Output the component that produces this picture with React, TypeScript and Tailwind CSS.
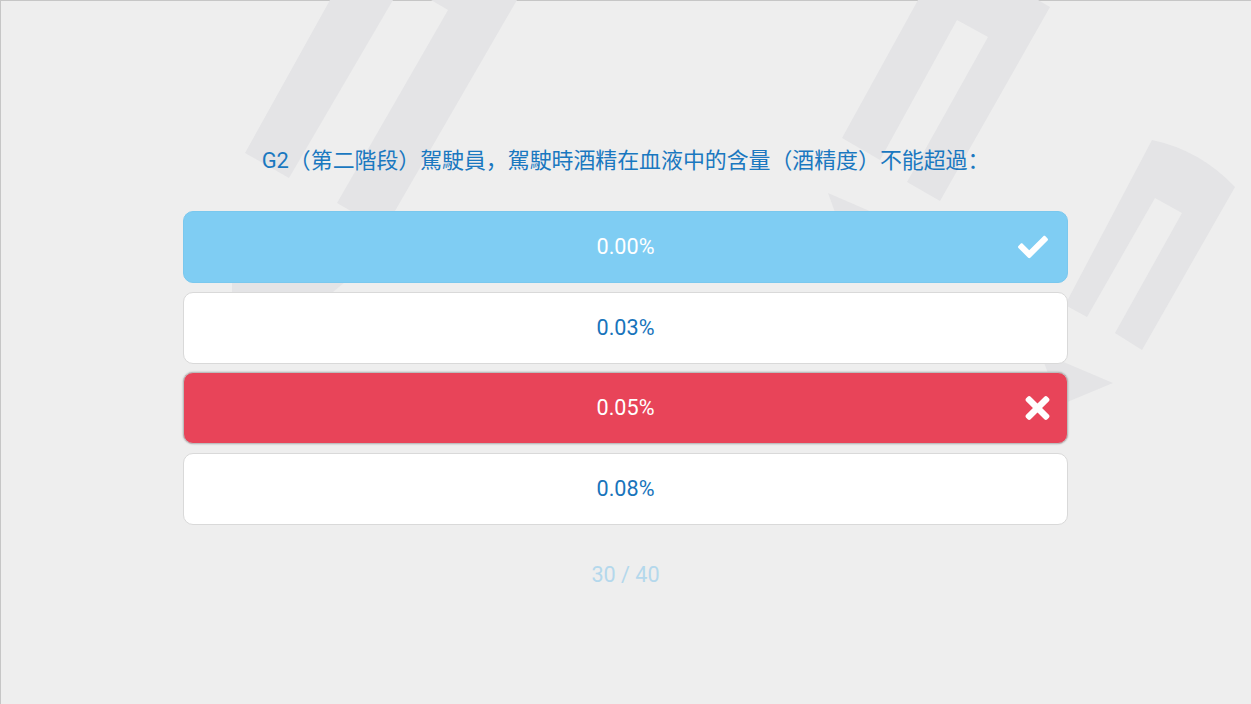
import React from 'react';

type Answer = { label: string; state: 'correct' | 'wrong' | 'idle' };

const answers: Answer[] = [
  { label: '0.00%', state: 'correct' },
  { label: '0.03%', state: 'idle' },
  { label: '0.05%', state: 'wrong' },
  { label: '0.08%', state: 'idle' },
];

const CheckIcon = () => (
  <svg className="w-[30px] h-[25px]" viewBox="0 65 512 382" fill="currentColor">
    <path d="M173.898 439.404l-166.4-166.4c-9.997-9.997-9.997-26.206 0-36.204l36.203-36.204c9.997-9.998 26.207-9.998 36.204 0L192 312.69 432.095 72.596c9.997-9.997 26.207-9.997 36.204 0l36.203 36.204c9.997 9.997 9.997 26.206 0 36.204l-294.4 294.401c-9.998 9.997-26.207 9.997-36.204-.001z" />
  </svg>
);

const CrossIcon = () => (
  <svg className="w-[25px] h-[24px]" viewBox="0 80 352 352" fill="currentColor">
    <path d="M242.72 256l100.07-100.07c12.28-12.28 12.28-32.19 0-44.48l-22.24-22.24c-12.28-12.28-32.19-12.28-44.48 0L176 189.28 75.93 89.21c-12.28-12.28-32.19-12.28-44.48 0L9.21 111.45c-12.28 12.28-12.28 32.19 0 44.48L109.28 256 9.21 356.07c-12.28 12.28-12.28 32.19 0 44.48l22.24 22.24c12.28 12.28 32.2 12.28 44.48 0L176 322.72l100.07 100.07c12.28 12.28 32.2 12.28 44.48 0l22.24-22.24c12.28-12.28 12.28-32.19 0-44.48L242.72 256z" />
  </svg>
);

// faint watermark shapes behind the quiz
const Watermark = () => (
  <svg className="absolute inset-0 w-full h-full pointer-events-none" viewBox="0 0 1251 704" preserveAspectRatio="none">
    <g fill="#e4e4e6">
      <polygon points="330,0 245,153 289,178 393,0" />
      <polygon points="448,10 337,203 384,230 517,0 431,0" />
      <polygon points="232,215 345,282 333,292 232,300" />
      <polygon points="918,0 842,138 880,160 957,20 988,37 907,182 940,201 1050,7 1038,0" />
      <polygon points="828,193 895,222 845,240" />
      <path d="M1152,140 Q1200,150 1235,187 L1142,350 L1115,333 L1182,213 L1155,198 L1087,317 L1065,305 Z" />
      <polygon points="1040,352 1113,383 1060,405" />
    </g>
  </svg>
);

const AnswerButton: React.FC<{ answer: Answer }> = ({ answer }) => {
  const styles =
    answer.state === 'correct'
      ? 'bg-[#7fcdf3] border border-[#7ac8ee] text-white'
      : answer.state === 'wrong'
      ? 'bg-[#e84459] border border-[#bdbdbd] shadow-[0_0_2px_rgba(0,0,0,0.3)] text-white'
      : 'bg-white border border-[#d9d9d9] text-[#1874bb]';

  return (
    <button className={`relative w-full h-[72px] rounded-[10px] flex items-center justify-center text-[21.6px] leading-none ${styles}`}>
      <span>{answer.label}</span>
      {answer.state === 'correct' && (
        <span className="absolute right-[19px] top-1/2 -translate-y-1/2 flex">
          <CheckIcon />
        </span>
      )}
      {answer.state === 'wrong' && (
        <span className="absolute right-[17px] top-1/2 -translate-y-1/2 flex">
          <CrossIcon />
        </span>
      )}
    </button>
  );
};

export default function App() {
  return (
    <div
      className="relative w-full h-[704px] overflow-hidden bg-[#eeeeee] shadow-[inset_1px_1px_0_#c6c6c6]"
      style={{ fontFamily: 'Roboto, "Noto Sans CJK SC", sans-serif' }}
    >
      <Watermark />
      <div className="relative flex flex-col items-center pt-[145px]">
        <h1 className="text-[21.9px] leading-[32px] font-normal text-[#1a78c0] text-center">
          G2（第二階段）駕駛員，駕駛時酒精在血液中的含量（酒精度）不能超過：
        </h1>
        <div className="w-[885px] mt-[34px] flex flex-col gap-[8.5px]">
          {answers.map((a) => (
            <AnswerButton key={a.label} answer={a} />
          ))}
        </div>
        <p className="mt-[36px] text-[21.6px] leading-[28px] text-[#b4d8ec]">30 / 40</p>
      </div>
    </div>
  );
}
